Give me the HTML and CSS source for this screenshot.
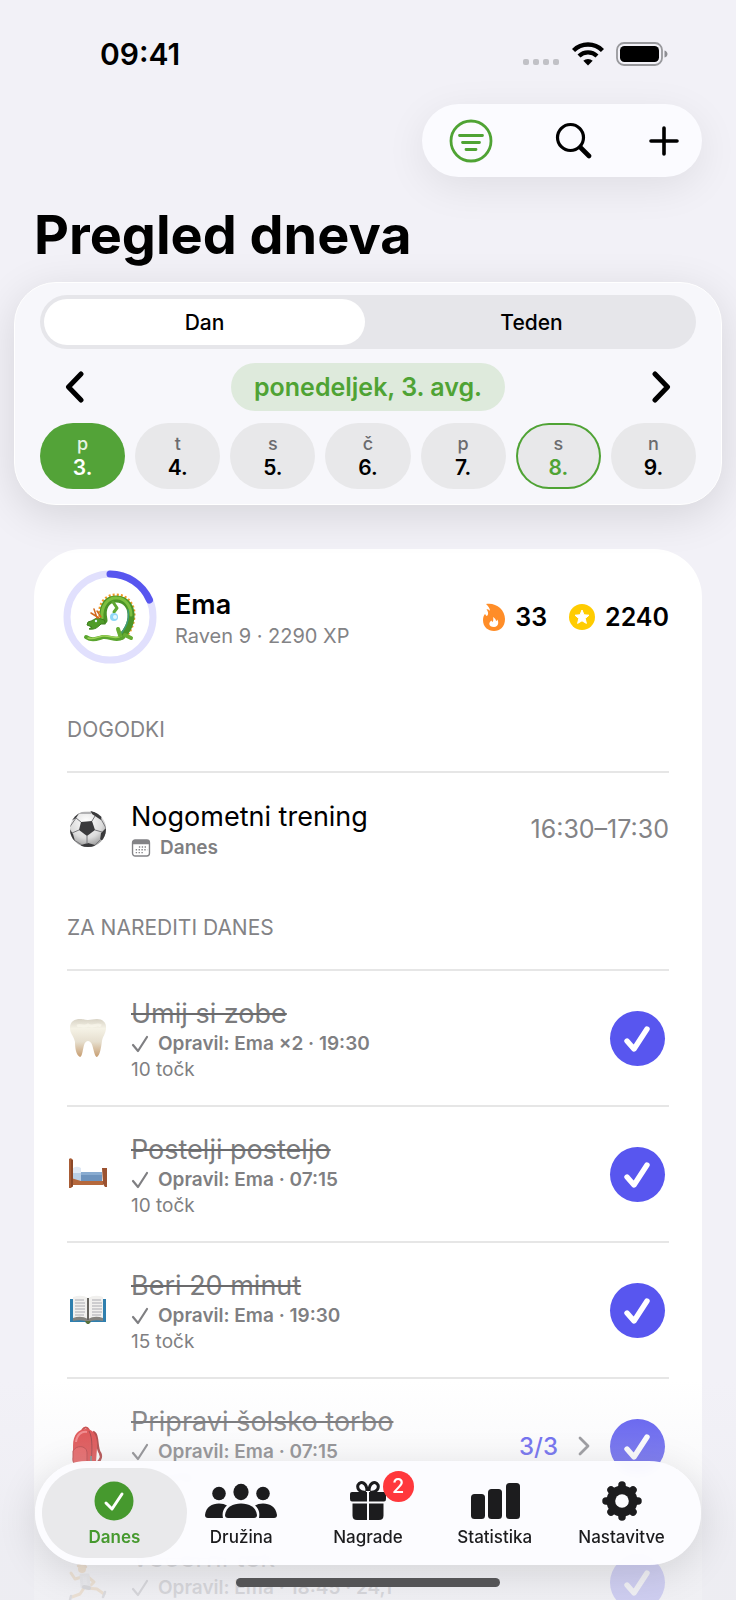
FILE: index.html
```html
<!DOCTYPE html>
<html lang="sl">
<head>
    <meta charset="UTF-8">
    <meta name="viewport" content="width=device-width, initial-scale=1.0">
    <title>Pregled dneva</title>
    <link rel="stylesheet" href="styles.css">
</head>
<body>

    <!-- shared icons -->
    <svg class="symbols" aria-hidden="true">
        <symbol id="check" viewBox="0 0 55 55">
            <path d="M17 30 L24 38 L37 18" fill="none" stroke="#fff" stroke-width="5.400" stroke-linecap="round" stroke-linejoin="round"/>
        </symbol>
        <symbol id="tick" viewBox="0 0 18 18">
            <path d="M2 10 L7 16 L16 2" fill="none" stroke="currentColor" stroke-width="2.200" stroke-linecap="round" stroke-linejoin="round"/>
        </symbol>
    </svg>

    <div class="app">
        <div class="status">
            <span class="clock">09:41</span>
            <div class="status-icons">
                <svg width="37" height="24" viewBox="0 0 37 24" fill="#c1c1c6">
                    <rect x="0" y="17" width="6" height="6" rx="2"/>
                    <rect x="10" y="17" width="6" height="6" rx="2"/>
                    <rect x="20" y="17" width="6" height="6" rx="2"/>
                    <rect x="30" y="17" width="6" height="6" rx="2"/>
                </svg>
                <svg width="32" height="24" viewBox="0 0 32 24" fill="none" stroke="#000">
                    <path d="M1.500 8.500 A20.500 20.500 0 0 1 30.500 8.500" stroke-width="4.400"/>
                    <path d="M7 14 A12.800 12.800 0 0 1 25 14" stroke-width="4.200"/>
                    <path d="M16 23.500 L11.300 18.800 A6.800 6.800 0 0 1 20.700 18.800 Z" fill="#000" stroke="none"/>
                </svg>
                <svg width="52" height="24" viewBox="0 0 52 24">
                    <rect x="1" y="1" width="45" height="22" rx="7" fill="none" stroke="#98989c" stroke-width="1.800"/>
                    <rect x="4" y="4" width="39" height="16" rx="4.500"/>
                    <path d="M48.500 8.500 C52.500 9.500 52.500 14.500 48.500 15.500 Z" fill="#8e8e93"/>
                </svg>
            </div>
        </div>

        <div class="toolbar">
            <button aria-label="Filter">
                <svg width="44" height="44" viewBox="0 0 44 44" fill="none" stroke="#4fa334" stroke-width="2.800" stroke-linecap="round">
                    <circle cx="22" cy="22" r="20"/>
                    <path d="M10.500 16.500 H33.500 M13.500 23.500 H30.500 M17 30.500 H27"/>
                </svg>
            </button>
            <button aria-label="Iskanje">
                <svg width="38" height="38" viewBox="0 0 38 38" fill="none" stroke="#000" stroke-linecap="round">
                    <circle cx="16.500" cy="15.500" r="13" stroke-width="3.200"/>
                    <path d="M27 26 L35 34" stroke-width="4.600"/>
                </svg>
            </button>
            <button aria-label="Dodaj">
                <svg width="30" height="30" viewBox="0 0 30 30" fill="none" stroke="#000" stroke-width="3.600" stroke-linecap="round">
                    <path d="M15 2 V28 M2 15 H28"/>
                </svg>
            </button>
        </div>

        <h1>Pregled dneva</h1>

        <div class="panel">
            <div class="segment">
                <button class="active">Dan</button>
                <button>Teden</button>
            </div>
            <div class="date-row">
                <button class="arrow" aria-label="Nazaj">
                    <svg width="20" height="32" viewBox="0 0 20 32" fill="none" stroke="#000" stroke-width="5" stroke-linecap="round" stroke-linejoin="round"><path d="M17 3 L4.500 16 L17 29"/></svg>
                </button>
                <button class="date">ponedeljek, 3. avg.</button>
                <button class="arrow" aria-label="Naprej">
                    <svg width="20" height="32" viewBox="0 0 20 32" fill="none" stroke="#000" stroke-width="5" stroke-linecap="round" stroke-linejoin="round"><path d="M3 3 L15.500 16 L3 29"/></svg>
                </button>
            </div>
            <div class="days">
                <button class="selected"><span>p</span>3.</button>
                <button><span>t</span>4.</button>
                <button><span>s</span>5.</button>
                <button><span>č</span>6.</button>
                <button><span>p</span>7.</button>
                <button class="today"><span>s</span>8.</button>
                <button><span>n</span>9.</button>
            </div>
        </div>

        <div class="card">
            <div class="profile">
                <svg class="ring" width="86" height="86" viewBox="0 0 86 86">
                    <circle cx="43" cy="43" r="43" fill="none" stroke="#e1e0fd" stroke-width="7"/>
                    <path d="M43 0 A43 43 0 0 1 82.500 26" fill="none" stroke="#5856ef" stroke-width="7" stroke-linecap="round"/>
                    <!-- dragon -->
                    <g transform="translate(18 19)" fill="none" stroke-linecap="round" stroke-linejoin="round">
                        <path d="M15 24 C13 11 20 2 31 2 C43 2 50 12 49 24 C48 32 46 37 42 42" stroke="#f29a26" stroke-width="3" stroke-dasharray="2 2" stroke-linecap="butt"/>
                        <path d="M19 27 C16 14 22 6 31 6 C41 6 47 14 46 25 C45 34 41 39 37 43" stroke="#4b9427" stroke-width="7"/>
                        <path d="M17 25 C16 13 23 4 32 5 C40 5 46 13 46 22" stroke="#7dbf3f" stroke-width="3"/>
                        <path d="M43 17 C45 28 40 35 36 41" stroke="#3f9a7a" stroke-width="1.500"/>
                        <path d="M38 44 C31 49 25 43 18 44 C11 46 7 48 1 44" stroke="#5aa52f" stroke-width="4"/>
                        <path d="M36 43 C30 47 25 42 18 43 C12 44 8 47 3 45" stroke="#9dd257" stroke-width="1.500"/>
                        <path d="M35 42 L33 36 M40 42 L46 45" stroke="#67ad34" stroke-width="4"/>
                        <path d="M28 9 L32 15 L29 19" stroke="#5da632" stroke-width="3"/>
                        <path d="M19 27 L13 25 C10 25 8 28 3 29 L2 32 L7 34 L4 36 C10 37 13 34 16 31 L20 31 Z" fill="#4f9c28" stroke="#3c7f1d"/>
                        <path d="M12 25 L9 16 M14 25 L6 20 M16 24 L12 18" stroke="#d2691e" stroke-width="1.500"/>
                        <circle cx="11" cy="28" r="1.200" fill="#dff5ff"/>
                        <circle cx="29" cy="24" r="4" fill="#8fd6f7"/>
                        <circle cx="30" cy="24" r="2" fill="#e3f7ff"/>
                    </g>
                </svg>
                <div class="who">
                    <h2>Ema</h2>
                    <p>Raven 9 · 2290 XP</p>
                </div>
                <div class="score">
                    <svg width="22" height="28" viewBox="0 0 22 28">
                        <path d="M3 1 C12 -1 22 6 22 16 C22 24 17 28 11 28 C5 28 0 24 0 17 C0 14 1 12 2 11 C3 12 3 13 4 13 C6 11 5 8 3.500 6.500 C5 6 6 7 7 8 C7 5 5 3 3 1 Z" fill="#ff8d28"/>
                        <path d="M10 14 C12 15 13 17 13 18 C14 18 14 17 14 16.500 C16 18 16 24 11 24 C5 24 5.500 19 8.500 17.500 C8.500 18 9 18.500 9.500 19 C10.500 18 10.500 16 10 14 Z" fill="#fff"/>
                    </svg>
                    <span>33</span>
                </div>
                <div class="score">
                    <svg width="26" height="26" viewBox="0 0 26 26">
                        <circle cx="13" cy="13" r="13" fill="#ffcc00"/>
                        <path d="M13 6 L15 10.800 L20 11.200 L16.200 14.500 L17.400 19.400 L13 16.800 L8.600 19.400 L9.800 14.500 L6 11.200 L11 10.800 Z" fill="#fff" stroke="#fff" stroke-width="1" stroke-linejoin="round"/>
                    </svg>
                    <span>2240</span>
                </div>
            </div>

            <h3>DOGODKI</h3>
            <div class="event">
                <svg class="emoji" width="40" height="40" viewBox="0 0 40 40">
                    <defs>
                        <radialGradient id="ball" cx=".45" cy=".3" r=".75"><stop offset="0" stop-color="#fff"/><stop offset=".6" stop-color="#dcdcdc"/><stop offset="1" stop-color="#8c8c8c"/></radialGradient>
                        <clipPath id="ball-clip"><circle cx="21" cy="20" r="18"/></clipPath>
                    </defs>
                    <circle cx="21" cy="20" r="18" fill="url(#ball)"/>
                    <g clip-path="url(#ball-clip)" fill="#3a3a3c">
                        <path d="M14 13 L25 12 L28 21 L20 27 L12 21 Z"/>
                        <path d="M23 1 L35 6 L34 11 L25 5 Z M2 13 L9 4 L13 3 L9 9 Z M2 19 L6 25 L8 32 L2 29 Z M14 36 L21 34 L28 36 L26 40 L15 40 Z M39 19 L34 24 L33 31 L39 31 Z"/>
                        <path d="M14 13 L9 9 M25 12 L28 7 M28 21 L35 23 M20 27 L20 35 M12 21 L5 24 M12 4 L24 4 M7 31 L15 36 M28 36 L34 30 M34 10 L39 19 M9 9 L2 19" fill="none" stroke="#77777a" stroke-width="1"/>
                    </g>
                </svg>
                <div class="info">
                    <h4>Nogometni trening</h4>
                    <p class="when">
                        <svg width="20" height="18" viewBox="0 0 18 17">
                            <rect x="1" y="1" width="16" height="15" rx="2.500" fill="none" stroke="#838386" stroke-width="1.300"/>
                            <path d="M1 5 V3 Q1 1 3 1 H15 Q17 1 17 3 V5 Z" fill="#838386"/>
                            <path d="M7 7.500 H15 M4 10.200 H15 M4 12.900 H12" stroke="#838386" stroke-width="1.300" stroke-dasharray="1.300 1.400"/>
                        </svg>
                        Danes
                    </p>
                </div>
                <span class="time">16:30–17:30</span>
            </div>

            <h3>ZA NAREDITI DANES</h3>
            <div class="task">
                <svg class="emoji" width="40" height="40" viewBox="0 0 40 40">
                    <defs><linearGradient id="tooth" x2="0" y2="1"><stop offset="0" stop-color="#d8d3c5"/><stop offset=".25" stop-color="#f5f2e6"/><stop offset=".6" stop-color="#e6dfcf"/><stop offset="1" stop-color="#c79d70"/></linearGradient></defs>
                    <path d="M3 10 C3 3 8 1 13 1 C17 1 18 2 21 2 C24 2 26 1 30 1 C35 1 40 4 39 11 C38 17 36 18 35 23 C34 30 33 37 30 39 C26 38 27 23 21 23 C15 23 17 38 13 39 C9 37 8 30 8 24 C7 18 3 16 3 10 Z" fill="url(#tooth)"/>
                    <path d="M10 8 C14 6 17 10 21 7 C26 10 30 5 34 8" fill="none" stroke="#fffdf3" stroke-width="3" opacity=".5"/>
                </svg>
                <div class="info">
                    <h4>Umij si zobe</h4>
                    <p class="done"><svg width="18" height="18"><use href="#tick"/></svg>Opravil: Ema ×2 · 19:30</p>
                    <p class="points">10 točk</p>
                </div>
                <label class="toggle"><input type="checkbox" aria-label="Umij si zobe" checked><svg width="55" height="55"><use href="#check"/></svg></label>
            </div>
            <div class="task">
                <svg class="emoji" width="40" height="40" viewBox="0 0 40 40">
                    <path d="M5 15 Q9 11 14 14 V20 H5 Z" fill="#dfe9f5"/>
                    <path d="M5 19 H14 V28 H5 Z" fill="#b9cfe6"/>
                    <path d="M14 18 H35 V28 H14 Z" fill="#6d93bd"/>
                    <path d="M14 18 H35 V21 H14 Z" fill="#88abd0"/>
                    <path d="M4 24 L14 27 H36 V31 H4 Z" fill="#b5683c"/>
                    <path d="M2 5 Q4 3 6 6 V32 L4 34 H2 Z" fill="#a85c35"/>
                    <path d="M5 6 V33" stroke="#6f351c"/>
                    <path d="M35 14 H40 V33 H38 L36 30 Z" fill="#9b5230"/>
                </svg>
                <div class="info">
                    <h4>Postelji posteljo</h4>
                    <p class="done"><svg width="18" height="18"><use href="#tick"/></svg>Opravil: Ema · 07:15</p>
                    <p class="points">10 točk</p>
                </div>
                <label class="toggle"><input type="checkbox" aria-label="Postelji posteljo" checked><svg width="55" height="55"><use href="#check"/></svg></label>
            </div>
            <div class="task">
                <svg class="emoji" width="40" height="40" viewBox="0 0 40 40">
                    <path d="M3 9 H39 V32 H24 L21 34 L18 32 H3 Z" fill="#2f7fae"/>
                    <path d="M6 7 Q15 4 21 8 Q28 4 36 7 V29 Q28 26 21 30 Q14 26 6 29 Z" fill="#f1f0ee"/>
                    <path d="M6 28 Q14 25 21 29 Q28 25 36 28 V31 Q28 29 21 32 Q14 29 6 31 Z" fill="#85837e"/>
                    <path d="M21 8 V30" stroke="#66645f" stroke-width="2"/>
                    <path d="M8 10 L17 10 M8 13 L18 13 M8 16 L18 16 M8 19 L18 19 M8 22 L18 22 M8 25 L17 25 M25 10 L34 10 M25 13 L35 13 M25 16 L35 16 M25 19 L35 19 M25 22 L35 22 M25 25 L34 25" stroke="#aaaab0" stroke-width="1"/>
                    <path d="M18 31 H24 L22 34 H20 Z" fill="#59713a"/>
                </svg>
                <div class="info">
                    <h4>Beri 20 minut</h4>
                    <p class="done"><svg width="18" height="18"><use href="#tick"/></svg>Opravil: Ema · 19:30</p>
                    <p class="points">15 točk</p>
                </div>
                <label class="toggle"><input type="checkbox" aria-label="Beri 20 minut" checked><svg width="55" height="55"><use href="#check"/></svg></label>
            </div>
            <div class="task">
                <svg class="emoji" width="40" height="40" viewBox="0 0 40 40">
                    <path d="M26 6 C32 8 29 22 33 27 C36 32 31 37 28 38" fill="none" stroke="#a82d2c" stroke-width="2.500"/>
                    <path d="M15 4 Q19 -1 22 4" fill="none" stroke="#c33534" stroke-width="2"/>
                    <path d="M6 20 C6 8 12 3 19 3 C27 3 31 11 30 22 L29 36 Q28 39 24 39 H10 Q6 39 6 34 Z" fill="#dc3b3c"/>
                    <path d="M9 16 C10 8 15 5 20 6" fill="none" stroke="#f1787a" stroke-width="2"/>
                    <path d="M6 25 C9 19 19 19 20 26 L20 38 H9 Q5 37 6 31 Z" fill="#e54b4c" stroke="#b32c2e" stroke-width="1"/>
                    <path d="M22 5 C26 12 25 25 24 38" fill="none" stroke="#94292d" stroke-width="1"/>
                    <path d="M24 30 v6" stroke="#777" stroke-width="2"/>
                </svg>
                <div class="info">
                    <h4>Pripravi šolsko torbo</h4>
                    <p class="done"><svg width="18" height="18"><use href="#tick"/></svg>Opravil: Ema · 07:15</p>
                    <p class="points">10 točk</p>
                </div>
                <span class="count">3/3</span>
                <svg width="12" height="20" viewBox="0 0 12 20" fill="none" stroke="#8a8a8e" stroke-width="2.800" stroke-linecap="round" stroke-linejoin="round"><path d="M2 2 L10 10 L2 18"/></svg>
                <label class="toggle"><input type="checkbox" aria-label="Pripravi šolsko torbo" checked><svg width="55" height="55"><use href="#check"/></svg></label>
            </div>
            <div class="task">
                <svg class="emoji" width="40" height="40" viewBox="0 0 40 40" fill="none" stroke-linecap="round" stroke-linejoin="round">
                    <circle cx="15" cy="7" r="4" fill="#e8a94b"/>
                    <path d="M11 4 Q16 0 19 5" stroke="#d99a46" stroke-width="2.500"/>
                    <path d="M15 15 L8 17 L4 11 M21 15 L27 20 L24 23" stroke="#e8b060" stroke-width="3"/>
                    <path d="M14 13 L21 13 L22 24 L15 25 Z" fill="#dedede" stroke="#d0d0d0" stroke-width="3"/>
                    <path d="M17 26 L13 32 L5 35 M20 26 L30 27 L37 32" stroke="#e8b060" stroke-width="3"/>
                    <path d="M4 34 L3 38 M38 30 L36 35" stroke="#999" stroke-width="2.500"/>
                    <path d="M17 25 L22 26" stroke="#888" stroke-width="4"/>
                </svg>
                <div class="info">
                    <h4>Večerni tek</h4>
                    <p class="done"><svg width="18" height="18"><use href="#tick"/></svg>Opravil: Ema · 18:45 · 24,1</p>
                    <p class="points">20 točk</p>
                </div>
                <label class="toggle"><input type="checkbox" aria-label="Večerni tek" checked><svg width="55" height="55"><use href="#check"/></svg></label>
            </div>
        </div>

        <div class="fade"></div>

        <nav class="tabs">
            <a href="#" class="current">
                <svg width="72" height="40" viewBox="0 0 72 40">
                    <circle cx="36" cy="20" r="19.500" fill="#46992e"/>
                    <path d="M28 22 L34 28 L44 13" fill="none" stroke="#fff" stroke-width="3" stroke-linecap="round" stroke-linejoin="round"/>
                </svg>
                Danes
            </a>
            <a href="#">
                <svg width="72" height="40" viewBox="0 0 72 40" fill="#1c1c1e">
                    <circle cx="14" cy="12.500" r="6.800"/>
                    <circle cx="58" cy="12.500" r="6.800"/>
                    <ellipse cx="36" cy="11" rx="7.600" ry="8.300"/>
                    <path d="M3 37 Q0 37 0 34 C1 26 7 22.500 14 22.500 Q19 22.500 22 24.500 C18 28 17 32 18 37 Z"/>
                    <path d="M69 37 Q72 37 72 34 C71 26 65 22.500 58 22.500 Q53 22.500 50 24.500 C54 28 55 32 54 37 Z"/>
                    <path d="M23 37 Q20 37 20 34 C21 26 28 22.500 36 22.500 C44 22.500 51 26 52 34 Q52 37 49 37 Z"/>
                </svg>
                Družina
            </a>
            <a href="#">
                <svg width="72" height="40" viewBox="0 0 72 40" fill="#1c1c1e">
                    <path d="M34 11 C27 12 25 7 26 4 C29 -1 35 2 35 10 M38 11 C45 12 47 7 46 4 C43 -1 37 2 37 10" fill="none" stroke="#1c1c1e" stroke-width="3"/>
                    <path d="M20 11 H35 V20.500 H20 Q18 20.500 18 18 V13 Q18 11 20 11 Z M37 11 H52 Q54 11 54 13 V18 Q54 20.500 52 20.500 H37 Z"/>
                    <path d="M20.500 22.500 H35 V39 H25 Q20.500 39 20.500 34.500 Z M37 22.500 H51.500 V34.500 Q51.500 39 47 39 H37 Z"/>
                </svg>
                <span class="badge">2</span>
                Nagrade
            </a>
            <a href="#">
                <svg width="72" height="40" viewBox="0 0 72 40" fill="#1c1c1e">
                    <rect x="12" y="13" width="14" height="25" rx="3.500"/>
                    <rect x="29" y="8" width="14" height="30" rx="3.500"/>
                    <rect x="47" y="2" width="14" height="36" rx="3.500"/>
                </svg>
                Statistika
            </a>
            <a href="#">
                <svg width="72" height="40" viewBox="0 0 72 40">
                    <g stroke="#1c1c1e" stroke-width="7.500" stroke-linejoin="round" stroke-linecap="round">
                        <path d="M36 4 V36 M20 20 H52 M25 9 L47 31 M47 9 L25 31"/>
                    </g>
                    <circle cx="36" cy="20" r="15.500" fill="#1c1c1e"/>
                    <circle cx="36" cy="20" r="6.800" fill="#fcfcff"/>
                </svg>
                Nastavitve
            </a>
        </nav>
        <div class="home-bar"></div>
    </div>

</body>
</html>
```
FILE: styles.css
```css
* {
    box-sizing: border-box;
}
body {
    font-family: Inter, "Noto Sans", sans-serif;
    background-color: #f2f1f7;
    color: #000;
    margin: 0;
}
h1, h2, h3, h4, p {
    margin: 0;
}
button {
    font: inherit;
    color: inherit;
    background: none;
    border: 0;
    padding: 0;
    cursor: pointer;
}
svg {
    display: block;
    flex: none;
}
.symbols {
    position: absolute;
    width: 0;
    height: 0;
}
.app {
    position: relative;
    height: 100vh;
    overflow: hidden;
}

/* status bar */
.status {
    display: flex;
    justify-content: space-between;
    align-items: center;
    height: 104px;
    padding: 4px 68px 0 100px;
}
.clock {
    font-size: 30px;
    font-weight: 600;
}
.status-icons {
    display: flex;
    gap: 12px;
}

/* toolbar */
.toolbar {
    display: flex;
    justify-content: space-between;
    align-items: center;
    width: 280px;
    height: 73px;
    margin: 0 34px 0 auto;
    padding: 0 23px 0 27px;
    border-radius: 37px;
    background: #fbfbff;
    box-shadow: 0 10px 40px rgba(0, 0, 0, 0.08);
}
.toolbar button:nth-child(2) {
    margin-left: 4px;
}
h1 {
    padding: 25px 34px 15px;
    font-size: 54px;
    line-height: 65px;
    font-weight: 700;
}

/* day picker */
.panel {
    position: relative;
    margin: 0 14px;
    padding: 12px 25px 15px;
    border: 1px solid #fff;
    border-radius: 42px;
    background: #f7f7fb;
    box-shadow: 0 10px 44px rgba(0, 0, 0, 0.12);
}
.segment {
    display: flex;
    gap: 6px;
    height: 54px;
    padding: 4px;
    border-radius: 27px;
    background: #e6e6ea;
    font-size: 21px;
    font-weight: 500;
}
.segment button {
    flex: 1;
    border-radius: 23px;
}
.segment .active {
    background: #fff;
}
.date-row {
    display: flex;
    justify-content: space-between;
    align-items: center;
    margin: 14px 0 12px;
    padding: 0 24px;
}
.date {
    height: 48px;
    padding: 0 23px;
    border-radius: 24px;
    background: #deeadc;
    color: #4fa334;
    font-size: 25px;
    font-weight: 600;
}
.days {
    display: flex;
    gap: 10px;
}
.days button {
    flex: 1;
    height: 66px;
    border-radius: 33px;
    background: #e8e8ea;
    font-size: 21px;
    line-height: 24px;
    font-weight: 600;
}
.days span {
    display: block;
    color: #6b6b6e;
    font-size: 18px;
    font-weight: 500;
}
.days .selected {
    background: #53a338;
    color: #fff;
}
.days .selected span {
    color: #e6f3e2;
}
.days .today {
    box-shadow: inset 0 0 0 2px #4fa334;
    color: #4fa334;
}

/* card */
.card {
    margin: 44px 34px 0;
    padding: 25px 33px;
    border-radius: 48px;
    background: #fff;
}
.profile {
    display: flex;
    align-items: center;
    gap: 22px;
    padding-bottom: 27px;
}
.ring {
    overflow: visible;
}
.who {
    flex: 1;
    padding-top: 3px;
}
h2 {
    font-size: 27px;
    line-height: 34px;
    font-weight: 600;
}
.who p {
    color: #838386;
    font-size: 20px;
    line-height: 28px;
}
.score {
    display: flex;
    align-items: center;
    gap: 10px;
    font-size: 25px;
    font-weight: 600;
}
h3 {
    margin-top: 29px;
    padding-bottom: 27px;
    border-bottom: 2px solid #e6e6e6;
    color: #838386;
    font-size: 21px;
    line-height: 28px;
    font-weight: 400;
}
.event, .task {
    display: flex;
    align-items: center;
    gap: 20px;
}
.emoji {
    margin-right: 4px;
}
.event {
    height: 112px;
}
.task {
    height: 136px;
    padding-right: 4px;
    border-bottom: 2px solid #e6e6e6;
}
.info {
    flex: 1;
    padding-top: 3px;
}
h4 {
    font-size: 27px;
    line-height: 34px;
    font-weight: 400;
}
.task h4 {
    color: #7b7b7d;
    text-decoration: line-through 2px #6a6a6c;
}
.when, .done {
    display: flex;
    align-items: center;
    gap: 9px;
    color: #7f7f82;
    font-size: 19px;
    line-height: 28px;
    font-weight: 600;
}
.done {
    line-height: 26px;
}
.points {
    color: #7f7f82;
    font-size: 19px;
    line-height: 26px;
}
.time {
    color: #838386;
    font-size: 25px;
}
.count {
    color: #5856ef;
    font-size: 24px;
    font-weight: 500;
}
.toggle {
    display: grid;
}
.toggle input, .toggle svg {
    grid-area: 1 / 1;
}
.toggle input {
    appearance: none;
    width: 55px;
    height: 55px;
    margin: 0;
    border-radius: 50%;
    background: #e1e0fd;
}
.toggle input:checked {
    background: #5856ef;
}
.toggle svg {
    pointer-events: none;
}

/* bottom bar */
.fade {
    position: absolute;
    left: 0;
    right: 0;
    bottom: 0;
    height: 220px;
    background: linear-gradient(rgba(236, 236, 241, 0), rgba(236, 236, 241, 0.3) 40%, rgba(236, 236, 241, 0.8) 70%);
}
.tabs {
    position: absolute;
    left: 35px;
    right: 35px;
    bottom: 35px;
    display: flex;
    height: 104px;
    padding: 0 16px;
    border-radius: 52px;
    background: rgba(252, 252, 255, 0.97);
    backdrop-filter: blur(4px);
    box-shadow: 0 8px 40px rgba(0, 0, 0, 0.12);
}
.tabs a {
    position: relative;
    flex: 1;
    display: flex;
    flex-direction: column;
    align-items: center;
    gap: 4px;
    padding-top: 20px;
    color: #1c1c1e;
    font-size: 17px;
    line-height: 24px;
    font-weight: 500;
    text-decoration: none;
}
.tabs .current {
    color: #46992e;
    font-weight: 600;
}
.tabs .current::before {
    content: "";
    position: absolute;
    inset: 7px -9px;
    z-index: -1;
    border-radius: 45px;
    background: #e9e9eb;
}
.badge {
    position: absolute;
    top: 10px;
    left: 78px;
    width: 31px;
    height: 31px;
    border-radius: 50%;
    background: #ff383c;
    color: #fff;
    font-size: 20px;
    line-height: 31px;
    font-weight: 500;
    text-align: center;
}
.home-bar {
    position: absolute;
    left: 50%;
    bottom: 13px;
    width: 264px;
    height: 9px;
    margin-left: -132px;
    border-radius: 5px;
    background: #545456;
}
```
